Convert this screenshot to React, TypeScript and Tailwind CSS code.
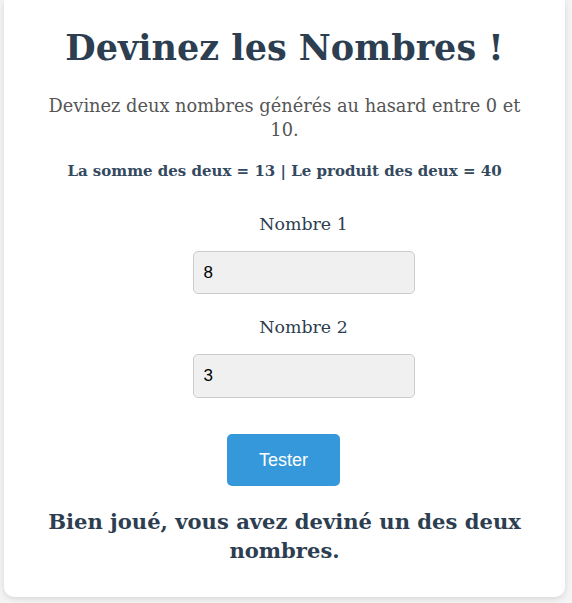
export default function App() {
  return (
    <div className="min-h-screen bg-[#f4f4f4] pb-[6px]">
      <div
        className="ml-1 mr-[7px] rounded-b-[10px] bg-white px-5 pt-[24px] pb-[32px] text-center shadow-[0_2px_6px_rgba(0,0,0,0.12)]"
        style={{ fontFamily: '"DejaVu Serif", serif' }}
      >
        <h1 className="text-[35px] font-bold leading-[48px] text-[#2c3e50]">
          Devinez les Nombres !
        </h1>
        <p className="mx-auto mt-[22px] max-w-[490px] text-[17.8px] leading-[24px] text-[#555555]">
          Devinez deux nombres générés au hasard entre 0 et 10.
        </p>
        <p className="mt-[18px] text-[15px] font-bold leading-[22px] text-[#34495e]">
          La somme des deux = 13 | Le produit des deux = 40
        </p>

        <div className="mt-[30px] flex flex-col items-center">
          <div className="ml-[38px] flex flex-col items-center">
            <label className="text-[17.4px] leading-[24px] text-[#2c3e50]">
              Nombre 1
            </label>
            <input
              type="text"
              defaultValue="8"
              className="mt-[15px] h-[43px] w-[222px] rounded-[5px] border border-[#cccccc] bg-[#f0f0f0] px-[10px] text-[17px] text-black outline-none"
              style={{ fontFamily: '"Liberation Sans", Arial, sans-serif' }}
            />
            <label className="mt-[21px] text-[17.4px] leading-[24px] text-[#2c3e50]">
              Nombre 2
            </label>
            <input
              type="text"
              defaultValue="3"
              className="mt-[15px] h-[44px] w-[222px] rounded-[5px] border border-[#cccccc] bg-[#f0f0f0] px-[10px] text-[17px] text-black outline-none"
              style={{ fontFamily: '"Liberation Sans", Arial, sans-serif' }}
            />
          </div>
          <button
            type="button"
            className="mt-[36px] mr-[2px] h-[52px] w-[113px] rounded-[5px] bg-[#3498db] text-[18px] text-white"
            style={{ fontFamily: '"Liberation Sans", Arial, sans-serif' }}
          >
            Tester
          </button>
        </div>

        <p className="mx-auto mt-[21px] max-w-[500px] text-[21.1px] font-bold leading-[29px] text-[#2c3e50]">
          Bien joué, vous avez deviné un des deux nombres.
        </p>
      </div>
    </div>
  );
}
